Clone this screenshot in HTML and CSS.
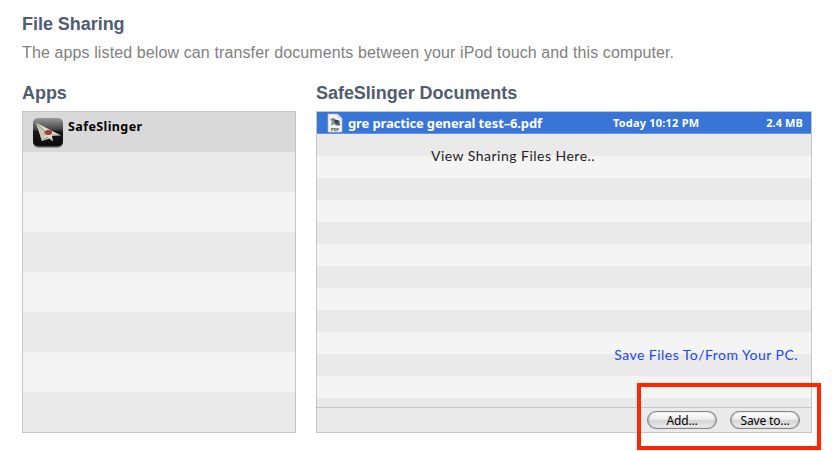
FILE: index.html
```
<!DOCTYPE html>
<html lang="en">
<head>
<meta charset="utf-8">
<title>File Sharing</title>
<link rel="stylesheet" href="styles.css">
</head>
<body>
<main class="page">
  <h1 class="heading">File Sharing</h1>
  <p class="intro">The apps listed below can transfer documents between your iPod touch and this computer.</p>
  <div class="columns">
    <section class="apps">
      <h2 class="heading">Apps</h2>
      <div class="panel app-list">
        <div class="app-row">
          <svg class="app-icon" viewBox="0 0 32 32">
            <defs>
              <linearGradient id="tile" x1="0" y1="0" x2="0" y2="1">
                <stop offset="0" stop-color="#999"/>
                <stop offset=".4" stop-color="#444"/>
                <stop offset=".48" stop-color="#171717"/>
                <stop offset="1" stop-color="#0c0c0c"/>
              </linearGradient>
            </defs>
            <rect x="1" y="2" width="30" height="29" rx="5" fill="#000" opacity=".3"/>
            <rect x="1" y="1" width="30" height="28.500" rx="5" fill="url(#tile)"/>
            <path d="M4 5.500 29 18.500 20 19 21 24.500 17.500 21.500 10 24Z" fill="#dedbcb"/>
            <path d="M4 5.500 14 18 10 24Z" fill="#c8c5b2"/>
            <path d="M4 5.500 14 16M16 20 11 23M20 18 28 18.500" fill="none" stroke="#77705f" stroke-width=".8"/>
            <path d="M12.500 14.500 15 13H18L20 14.500V16.500L18 18H15L12.500 16.500Z" fill="#96443f"/>
          </svg>
          <span class="app-name">SafeSlinger</span>
        </div>
      </div>
    </section>
    <section class="documents">
      <h2 class="heading">SafeSlinger Documents</h2>
      <div class="panel document-list">
        <div class="file-row">
          <svg class="file-icon" viewBox="0 0 16 20">
            <path d="M1 1h9.500L15 5.500V19H1Z" fill="#f3f3f1" stroke="#b8bdc5" stroke-width=".7"/>
            <path d="M10.500 1v4.500H15Z" fill="#d3d6dc"/>
            <path d="M3 6 7 5 9 7 12.500 7.500 13 10 10.500 13 7 11 4 12.500 5 9Z" fill="#687684"/>
            <path d="M4 6.500 8 11" stroke="#b5a68b" stroke-width="1.300"/>
            <circle cx="9.500" cy="8.700" r="2" fill="#2d3f5d"/>
            <path d="M11 11l2 1" stroke="#333" stroke-width="1.300"/>
            <text class="file-type" x="4" y="17.500">PDF</text>
          </svg>
          <span class="file-name">gre practice general test–6.pdf</span>
          <span class="file-date">Today 10:12 PM</span>
          <span class="file-size">2.4 MB</span>
        </div>
        <div class="list-body">
          <p class="note view-note">View Sharing Files Here..</p>
          <p class="note save-note">Save Files To/From Your PC.</p>
        </div>
        <div class="actions">
          <button class="button add">Add...</button>
          <button class="button save">Save to...</button>
        </div>
      </div>
    </section>
  </div>
</main>
<div class="highlight"></div>
</body>
</html>
```
FILE: styles.css
```
* { box-sizing: border-box; }
body {
  margin: 0;
  background: #fff;
  font-family: "Noto Sans", "Open Sans", sans-serif;
  position: relative;
  height: 451px;
  overflow: hidden;
}
.page { padding: 13px 20px 0 22px; }
.heading {
  margin: 0;
  font: bold 18px/22px "Liberation Sans", sans-serif;
  letter-spacing: -.04px;
  color: #525c6f;
}
.intro {
  margin: 8px 0 0;
  font: 16px/20px "Liberation Sans", sans-serif;
  letter-spacing: .115px;
  color: #808080;
  white-space: nowrap;
}
.columns { display: flex; gap: 20px; margin-top: 19px; }
.apps { width: 274px; }
.documents { width: 496px; }
.panel {
  height: 322px;
  margin-top: 7px;
  border: 1px solid #c5c5c5;
}
.app-list { background: repeating-linear-gradient(#f4f4f4 0 40px, #eaeaea 40px 80px); }
.app-row {
  display: flex;
  height: 40px;
  padding: 5px 0 0 8.5px;
  gap: 4.5px;
  background: #d9d9d9;
}
.app-icon { width: 32px; height: 32px; }
.app-name { font: bold 12.500px/20px "Noto Sans", sans-serif; letter-spacing: .4px; color: #000; }
.document-list { display: flex; flex-direction: column; }
.file-row {
  display: flex;
  align-items: center;
  height: 22px;
  padding: 0 8px 0 10px;
  background: #3875d7;
  border-bottom: 1px solid #6492e0;
  color: #fff;
  font: bold 11px/20px "Noto Sans", sans-serif;
  white-space: nowrap;
}
.file-icon { width: 16px; height: 20px; }
.file-type { font: bold 4px "Liberation Sans", sans-serif; fill: #333; }
.file-name { width: 265px; margin-left: 5px; font-size: 13px; letter-spacing: -.13px; }
.file-date { letter-spacing: .2px; }
.file-size { margin-left: auto; letter-spacing: .1px; }
.list-body {
  display: flex;
  flex-direction: column;
  justify-content: space-between;
  height: 273px;
  padding: 12px 13px 42px 114px;
  background: repeating-linear-gradient(#eaeaea 0 22px, #f4f4f4 22px 44px);
}
.note { margin: 0; font: 14px/20px Lato, sans-serif; color: #222; }
.view-note { letter-spacing: .48px; }
.save-note { align-self: flex-end; color: #1f45f5; letter-spacing: .46px; }
.actions {
  display: flex;
  flex: 1;
  justify-content: flex-end;
  gap: 13px;
  padding: 3px 11px 0 0;
  border-top: 1px solid #c5c5c5;
  background: #eaeaea;
}
.button {
  width: 70px;
  height: 18px;
  padding: 0;
  border: 1px solid #858585;
  border-radius: 9px;
  background: linear-gradient(#fff, #ededed 45%, #d5d5d5 55%, #eee);
  box-shadow: inset 1px 0 1px #aaa, inset -1px 0 1px #aaa;
  color: #000;
  font: 12px/15px "Noto Sans", sans-serif;
  letter-spacing: -.15px;
}
.highlight {
  position: absolute;
  left: 637px;
  top: 383px;
  width: 184px;
  height: 67px;
  border: 4px solid #ff2600;
}
```
